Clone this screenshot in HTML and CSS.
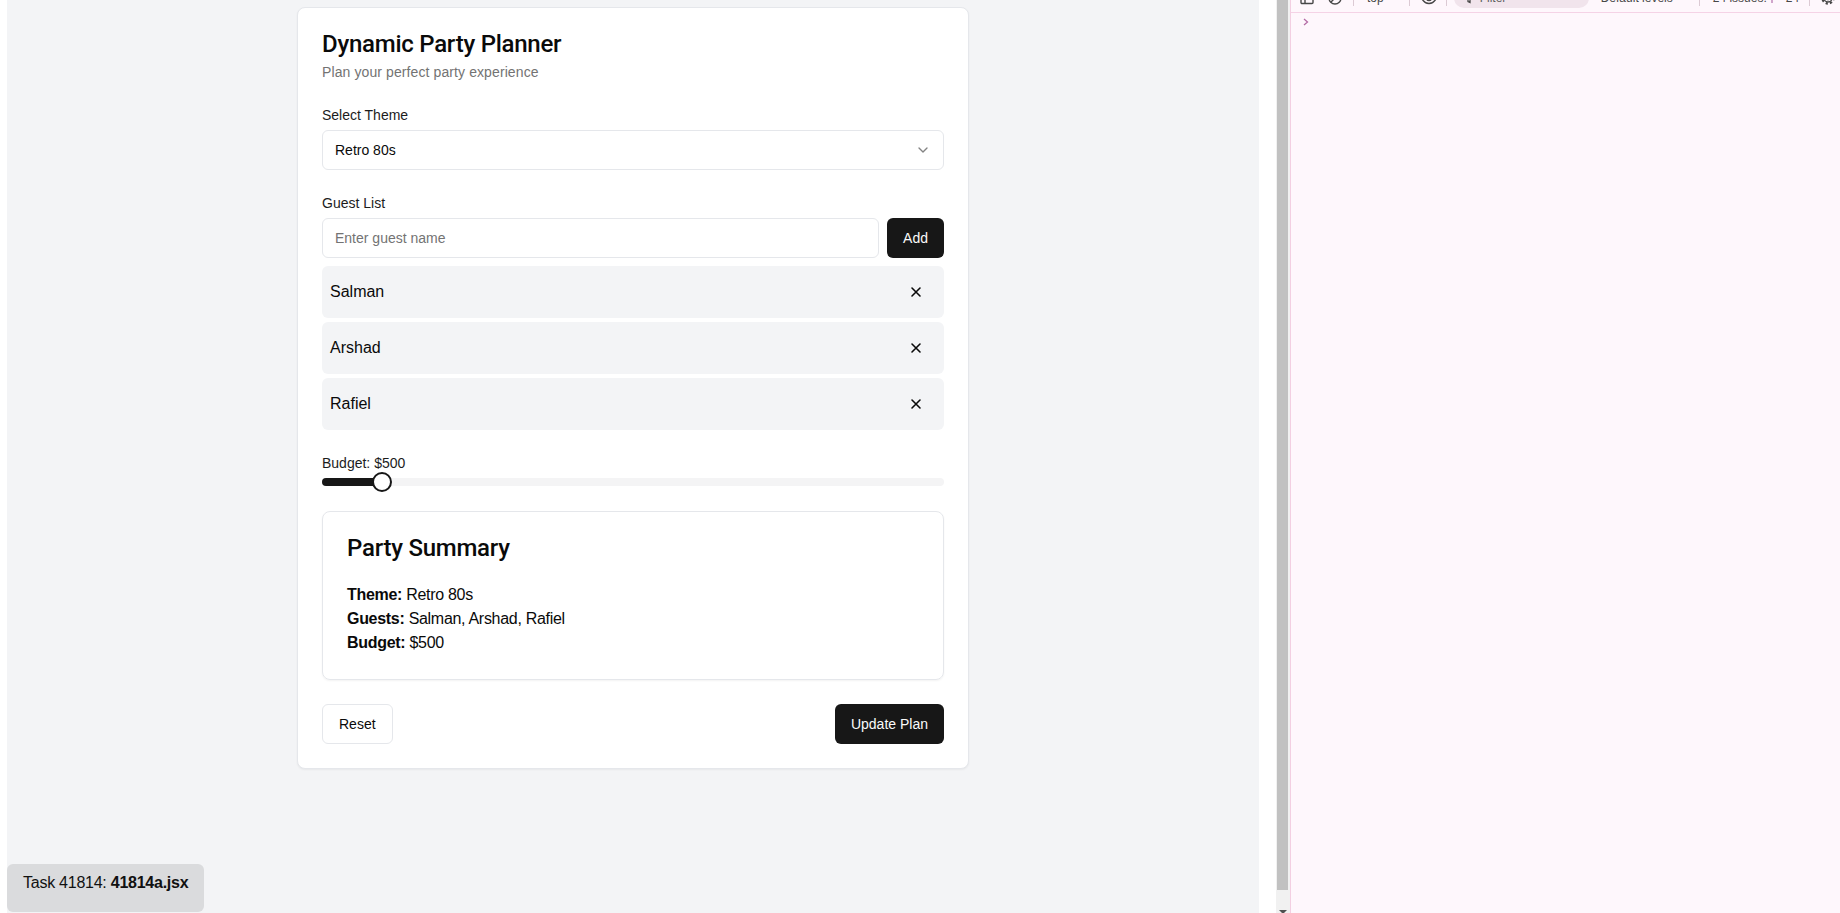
FILE: index.html
```html
<!DOCTYPE html>
<html lang="en">
<head>
<meta charset="utf-8">
<title>Dynamic Party Planner</title>
<link rel="stylesheet" href="styles.css">
</head>
<body>
<div class="screen">
  <div class="viewport">
    <main class="app">
      <section class="card">
        <header class="card-header">
          <h1 class="title">Dynamic Party Planner</h1>
          <p class="subtitle">Plan your perfect party experience</p>
        </header>

        <div class="field">
          <label class="label">Select Theme</label>
          <button class="select" type="button">
            <span>Retro 80s</span>
            <svg class="chevron" viewBox="0 0 24 24" width="16" height="16" fill="none" stroke="currentColor" stroke-width="2" stroke-linecap="round" stroke-linejoin="round"><path d="m6 9 6 6 6-6"/></svg>
          </button>
        </div>

        <div class="field">
          <label class="label">Guest List</label>
          <div class="input-row">
            <input class="input" type="text" placeholder="Enter guest name">
            <button class="btn btn-dark" type="button">Add</button>
          </div>
          <ul class="guests">
            <li class="guest"><span>Salman</span><button class="remove" type="button"><svg viewBox="0 0 24 24" width="16" height="16" fill="none" stroke="currentColor" stroke-width="2.4" stroke-linecap="round"><path d="M18 6 6 18M6 6l12 12"/></svg></button></li>
            <li class="guest"><span>Arshad</span><button class="remove" type="button"><svg viewBox="0 0 24 24" width="16" height="16" fill="none" stroke="currentColor" stroke-width="2.4" stroke-linecap="round"><path d="M18 6 6 18M6 6l12 12"/></svg></button></li>
            <li class="guest"><span>Rafiel</span><button class="remove" type="button"><svg viewBox="0 0 24 24" width="16" height="16" fill="none" stroke="currentColor" stroke-width="2.4" stroke-linecap="round"><path d="M18 6 6 18M6 6l12 12"/></svg></button></li>
          </ul>
        </div>

        <div class="budget">
          <label class="label budget-label">Budget: $500</label>
          <div class="slider">
            <div class="track"><div class="range" style="width:9.6%"></div></div>
            <span class="thumb" style="left:calc(9.6% - 10px)"></span>
          </div>
        </div>

        <div class="summary">
          <h2 class="summary-title">Party Summary</h2>
          <p class="summary-line"><b>Theme:</b> Retro 80s</p>
          <p class="summary-line"><b>Guests:</b> Salman, Arshad, Rafiel</p>
          <p class="summary-line"><b>Budget:</b> $500</p>
        </div>

        <div class="actions">
          <button class="btn btn-outline" type="button">Reset</button>
          <button class="btn btn-dark" type="button">Update Plan</button>
        </div>
      </section>
    </main>
  </div>

  <div class="scrollbar">
    <div class="scroll-thumb"></div>
    <div class="scroll-arrow"></div>
  </div>

  <aside class="devtools">
    <div class="dt-toolbar">
      <div class="dt-row">
        <svg class="dt-icon i-panel" viewBox="0 0 16 16" width="16" height="16" fill="none" stroke="#474747" stroke-width="1.4"><rect x="2" y="2.5" width="12" height="11" rx="1"/><path d="M6 2.5v11"/></svg>
        <svg class="dt-icon i-clear" viewBox="0 0 16 16" width="16" height="16" fill="none" stroke="#474747" stroke-width="1.4"><circle cx="8" cy="8" r="6"/><path d="M3.8 12.2 12.2 3.8"/></svg>
        <span class="dt-sep s-1"></span>
        <span class="dt-text t-top">top</span>
        <svg class="dt-caret" viewBox="0 0 6 4" width="6" height="4"><path d="M0 0h6L3 4z" fill="#474747"/></svg>
        <span class="dt-sep s-2"></span>
        <svg class="dt-icon i-eye" viewBox="0 0 18 18" width="18" height="18" fill="none" stroke="#474747" stroke-width="1.4"><path d="M1.5 9C3.5 5 6 3.5 9 3.5S14.5 5 16.5 9C14.5 13 12 14.5 9 14.5S3.5 13 1.5 9z"/><circle cx="9" cy="9" r="2.5"/></svg>
        <span class="dt-sep s-3"></span>
        <div class="dt-filter">
          <svg class="i-funnel" viewBox="0 0 10 12" width="10" height="12" fill="none" stroke="#474747" stroke-width="1.3"><path d="M1 1.5h8L6 6v4.5L4 9.5V6z"/></svg>
          <span class="dt-text t-filter">Filter</span>
        </div>
        <span class="dt-text t-levels">Default levels</span>
        <svg class="dt-caret" viewBox="0 0 6 4" width="6" height="4"><path d="M0 0h6L3 4z" fill="#474747"/></svg>
        <span class="dt-sep s-4"></span>
        <span class="dt-text t-issues">24 issues:</span>
        <svg class="i-flag" viewBox="0 0 8 10" width="8" height="10"><path d="M0.5 0h7v6h-6v4h-1z" fill="#a2559a"/></svg>
        <span class="dt-text t-count">24</span>
        <span class="dt-sep s-5"></span>
        <svg class="dt-icon i-gear" viewBox="0 0 16 16" width="16" height="16" fill="none" stroke="#474747"><circle cx="8" cy="8" r="5.5" stroke-width="2.4" stroke-dasharray="2.2 2.1"/><circle cx="8" cy="8" r="4" stroke-width="1.3"/><circle cx="8" cy="8" r="1.6" stroke-width="1.3"/></svg>
      </div>
    </div>
    <div class="dt-prompt">
      <svg viewBox="0 0 6 8" width="6" height="8" fill="none" stroke="#b46ba5" stroke-width="1.3"><path d="M1 1l3.5 3L1 7"/></svg>
    </div>
  </aside>
</div>

<div class="task-badge">Task 41814: <b>41814a.jsx</b></div>
</body>
</html>
```

FILE: styles.css
```css
* {
  box-sizing: border-box;
}

html, body {
  margin: 0;
  padding: 0;
  height: 913px;
  overflow: hidden;
  background: #ffffff;
  font-family: "Liberation Sans", Arial, sans-serif;
  color: #0a0a0a;
}

.screen {
  display: flex;
  width: 1840px;
  height: 913px;
}

/* ---------- page area ---------- */
.viewport {
  width: 1276px;
  flex: none;
  height: 100%;
  padding-left: 7px;
  padding-right: 17px;
  background: #ffffff;
}

.app {
  height: 100%;
  background: #f3f4f6;
  padding-top: 7px;
}

.card {
  width: 672px;
  margin: 0 auto;
  background: #ffffff;
  border: 1px solid #e5e7eb;
  border-radius: 8px;
  box-shadow: 0 1px 2px rgba(0, 0, 0, 0.05);
  padding: 24px;
}

.title {
  margin: 0;
  font-family: Roboto, "Liberation Sans", sans-serif;
  font-weight: 500;
  font-size: 24px;
  line-height: 24px;
  letter-spacing: -0.25px;
  color: #0a0a0a;
}

.subtitle {
  margin: 6px 0 0;
  font-size: 14px;
  line-height: 20px;
  letter-spacing: 0.1px;
  color: #737373;
}

.field {
  margin-top: 23px;
}

.label {
  display: block;
  font-size: 14px;
  line-height: 20px;
  margin-bottom: 5px;
  color: #1c1c1c;
}

.select {
  width: 100%;
  height: 40px;
  border: 1px solid #e5e7eb;
  border-radius: 6px;
  background: #ffffff;
  padding: 0 12px;
  display: flex;
  align-items: center;
  justify-content: space-between;
  font-family: inherit;
  font-size: 14px;
  color: #0a0a0a;
}

.chevron {
  color: #0a0a0a;
  opacity: 0.5;
}

.input-row {
  display: flex;
  gap: 8px;
  height: 40px;
}

.input {
  flex: 1;
  min-width: 0;
  height: 40px;
  border: 1px solid #e5e7eb;
  border-radius: 6px;
  padding: 0 12px;
  font-family: inherit;
  font-size: 14px;
  color: #0a0a0a;
  background: #ffffff;
  outline: none;
}

.input::placeholder {
  color: #737373;
}

.btn {
  height: 40px;
  padding: 0 16px;
  border-radius: 6px;
  font-family: inherit;
  font-size: 14px;
  cursor: pointer;
}

.btn-dark {
  background: #171717;
  color: #fafafa;
  border: none;
}

.btn-outline {
  background: #ffffff;
  color: #0a0a0a;
  border: 1px solid #e5e7eb;
}

.guests {
  list-style: none;
  margin: 8px 0 0;
  padding: 0;
  display: flex;
  flex-direction: column;
  gap: 4px;
}

.guest {
  height: 52px;
  background: #f3f4f6;
  border-radius: 6px;
  padding: 0 8px;
  display: flex;
  align-items: center;
  justify-content: space-between;
  font-size: 16px;
  color: #0a0a0a;
}

.remove {
  width: 40px;
  height: 36px;
  border: none;
  background: transparent;
  display: flex;
  align-items: center;
  justify-content: center;
  color: #0a0a0a;
  padding: 0;
}

.budget {
  margin-top: 24px;
}

.budget-label {
  line-height: 18px;
  margin-bottom: 0;
}

.slider {
  position: relative;
  height: 20px;
  display: flex;
  align-items: center;
}

.track {
  width: 100%;
  height: 8px;
  border-radius: 4px;
  background: #f4f4f5;
  overflow: hidden;
}

.range {
  height: 100%;
  background: #171717;
}

.thumb {
  position: absolute;
  top: 0;
  width: 20px;
  height: 20px;
  border-radius: 50%;
  border: 2px solid #171717;
  background: #ffffff;
}

.summary {
  margin-top: 19px;
  border: 1px solid #e5e7eb;
  border-radius: 8px;
  box-shadow: 0 1px 2px rgba(0, 0, 0, 0.05);
  padding: 24px;
}

.summary-title {
  margin: 0 0 23px;
  font-family: Roboto, "Liberation Sans", sans-serif;
  font-weight: 500;
  font-size: 24px;
  line-height: 24px;
  letter-spacing: -0.25px;
  color: #0a0a0a;
}

.summary-line {
  margin: 0;
  font-size: 16px;
  line-height: 24px;
  letter-spacing: -0.3px;
  color: #0a0a0a;
}

.actions {
  margin-top: 24px;
  display: flex;
  justify-content: space-between;
}

/* ---------- scrollbar ---------- */
.scrollbar {
  width: 14px;
  flex: none;
  height: 100%;
  background: #f1f1f1;
}

.scroll-thumb {
  margin-left: 1px;
  width: 11px;
  height: 890px;
  background: #c1c1c1;
}

.scroll-arrow {
  margin: 20px 0 0 3px;
  width: 0;
  height: 0;
  border-left: 4px solid transparent;
  border-right: 4px solid transparent;
  border-top: 4px solid #505050;
}

/* ---------- devtools ---------- */
.devtools {
  flex: 1;
  height: 100%;
  background: #fef7fc;
  border-left: 1px solid #f3cfe2;
}

.dt-toolbar {
  height: 13px;
  overflow: hidden;
  border-bottom: 1px solid #f5d3e6;
}

.dt-row {
  display: flex;
  align-items: center;
  height: 22px;
  margin-top: -13px;
  padding-left: 8px;
  font-size: 12px;
  color: #474747;
}

.dt-icon {
  flex: none;
}

.dt-text {
  white-space: nowrap;
  line-height: 14px;
}

.dt-caret {
  flex: none;
  margin-left: 7px;
}

.dt-sep {
  flex: none;
  width: 1px;
  height: 16px;
  background: #dccad4;
}

.i-clear { margin-left: 12px; }
.s-1 { margin-left: 10px; }
.t-top { margin-left: 13px; }
.s-2 { margin-left: 12px; }
.i-eye { margin-left: 10px; }
.s-3 { margin-left: 8px; }

.dt-filter {
  flex: none;
  margin-left: 7px;
  width: 135px;
  height: 20px;
  border-radius: 10px;
  background: #f1e4ec;
  display: flex;
  align-items: center;
  padding-left: 10px;
}

.t-filter {
  margin-left: 6px;
  color: #5e5e5e;
}

.t-levels { margin-left: 12px; }
.s-4 { margin-left: 13px; }
.t-issues { margin-left: 13px; }

.i-flag {
  flex: none;
  margin-left: 4px;
}

.t-count { margin-left: 7px; }
.s-5 { margin-left: 10px; }
.i-gear { margin-left: 10px; }

.dt-prompt {
  padding: 5px 0 0 12px;
  height: 14px;
}

.dt-prompt svg {
  display: block;
}

/* ---------- task badge (overlay) ---------- */
.task-badge {
  position: fixed;
  left: 7px;
  bottom: 1px;
  height: 48px;
  padding: 7px 16px 0;
  background: #dadbdd;
  border-radius: 6px;
  font-size: 16px;
  line-height: 24px;
  letter-spacing: -0.25px;
  color: #111111;
  white-space: nowrap;
}

.task-badge b {
  font-weight: 700;
}
```
